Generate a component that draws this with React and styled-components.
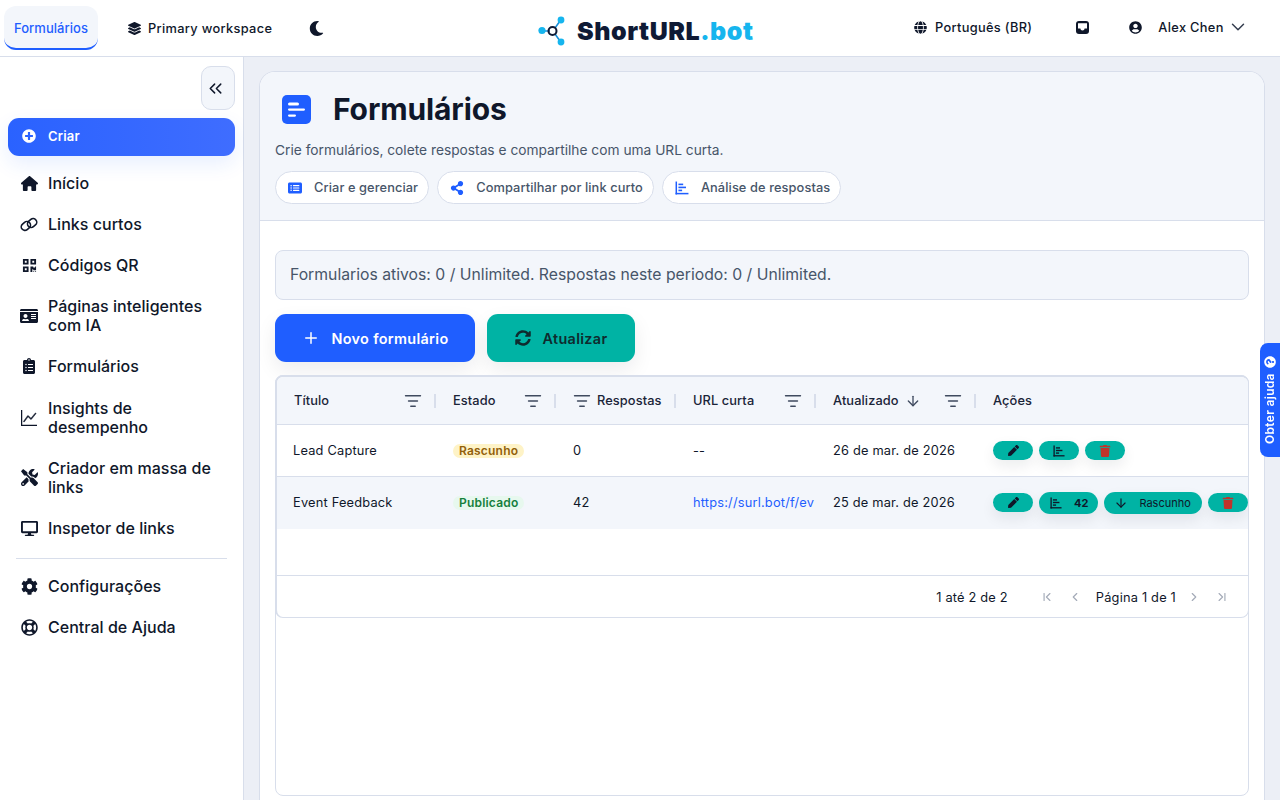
import React from "react";
import styled, { createGlobalStyle } from "styled-components";
import {
  FaLayerGroup,
  FaMoon,
  FaGlobe,
  FaUserCircle,
  FaPlusCircle,
  FaQrcode,
  FaIdCard,
  FaClipboardList,
  FaTools,
  FaDesktop,
  FaCog,
  FaRegLifeRing,
  FaShareAlt,
  FaSyncAlt,
  FaPen,
  FaTrash,
  FaQuestionCircle,
} from "react-icons/fa";
import { FaHouse, FaRectangleList } from "react-icons/fa6";
import { BsGraphUp } from "react-icons/bs";
import {
  ChevronDown,
  ChevronsLeft,
  Plus,
  ListFilter,
  ArrowDown,
  ChevronFirst,
  ChevronLast,
  ChevronLeft,
  ChevronRight,
} from "lucide-react";

const GlobalStyle = createGlobalStyle`
  html, body {
    margin: 0;
    height: 100%;
    overflow: hidden;
    background: #fff;
    font-family: Inter, "Noto Sans", sans-serif;
    color: #0f172a;
  }
  * { box-sizing: border-box; }
`;

//Page shell//
const Shell = styled.div`
  height: 800px;
  display: flex;
  flex-direction: column;
  overflow: hidden;
`;
const TopBar = styled.header`
  flex: 0 0 57px;
  display: flex;
  align-items: center;
  background: #fff;
  border-bottom: 1px solid #d8deeb;
`;
const TopLeft = styled.div`
  flex: 0 0 537px;
  display: flex;
  align-items: center;
  padding-left: 4px;
  align-self: flex-start;
  padding-top: 6px;
`;
const ActiveTab = styled.div`
  width: 94px;
  height: 44px;
  display: flex;
  align-items: center;
  justify-content: center;
  font-size: 13px;
  font-weight: 500;
  letter-spacing: 0.05px;
  padding-top: 1px;
  color: #1f5eff;
  background: #f3f6fb;
  border-radius: 12px;
  border-bottom: 2px solid #1f5eff;
`;
const TopItem = styled.div`
  display: flex;
  align-items: center;
  gap: ${(p) => p.$gap || 8}px;
  font-size: 12.8px;
  font-weight: 500;
  letter-spacing: 0.33px;
  color: #0f172a;
  margin-left: ${(p) => p.$ml || 0}px;
  white-space: nowrap;
`;
const WorkspaceItem = styled(TopItem)`
  height: 41px;
  gap: 7px;
`;
const UserIcon = styled(FaUserCircle)`
  margin-right: 9px;
`;
const UserChevron = styled(ChevronDown)`
  margin-left: -4px;
  color: #333c4e;
`;
const Logo = styled.div`
  display: flex;
  align-items: center;
  gap: 8px;
  font-family: Inter, sans-serif;
  font-weight: 900;
  font-size: 25px;
  letter-spacing: 0.55px;
  color: #0f1a35;
  padding-top: 6px;
  width: 217px;
  white-space: nowrap;
  span {
    color: #16b5ee;
  }
`;
const TopRight = styled.div`
  flex: 1;
  display: flex;
  align-items: center;
  padding: 0 0 2px 160px;
`;
const Body = styled.div`
  flex: 1;
  display: flex;
  min-height: 0;
`;

//Sidebar//
const Sidebar = styled.aside`
  flex: 0 0 244px;
  background: #fff;
  border-right: 1px solid #d8deeb;
  padding: 9px 8px 0;
`;
const CollapseRow = styled.div`
  display: flex;
  justify-content: flex-end;
  margin-bottom: 8px;
`;
const CollapseButton = styled.div`
  width: 34px;
  height: 44px;
  display: flex;
  align-items: center;
  justify-content: center;
  padding-right: 5px;
  background: #f3f6fb;
  border: 1px solid #d8deeb;
  border-radius: 10px;
  color: #0f172a;
`;
const CreateButton = styled.div`
  height: 38px;
  display: flex;
  align-items: center;
  gap: 12px;
  padding: 0 0 2px 14px;
  border-radius: 11px;
  background: linear-gradient(90deg, #2a62ff, #3f6dff);
  color: #fff;
  font-size: 13px;
  font-weight: 600;
  letter-spacing: 0.2px;
  box-shadow: 0 8px 20px rgba(31, 94, 255, 0.1);
  margin-bottom: 8px;
`;
const NavList = styled.nav`
  display: flex;
  flex-direction: column;
  gap: 3px;
`;
const NavItem = styled.div`
  display: flex;
  align-items: center;
  gap: 10px;
  padding: 9.5px 12px;
  margin-bottom: ${(p) => p.$mb || 0}px;
  font-size: 16px;
  line-height: 19px;
  font-weight: 500;
  letter-spacing: 0.03px;
  color: #0f172a;
`;
const NavIcon = styled.span`
  flex: 0 0 18px;
  width: 18px;
  height: 18px;
  display: flex;
  align-items: center;
  justify-content: center;
`;
const GraphIcon = styled(BsGraphUp)`
  stroke: currentColor;
  stroke-width: 0.5px;
`;
const NavDivider = styled.hr`
  border: none;
  height: 1px;
  background: #d8deeb;
  margin: 11px 8px 8px;
`;

//Main//
const Main = styled.main`
  flex: 1;
  min-width: 0;
  background: #eceff6;
  padding: 14px 15px 0;
`;
const Panel = styled.section`
  height: 100%;
  background: #fff;
  border: 1px solid #d8deeb;
  border-bottom: none;
  border-radius: 16px 16px 0 0;
  display: flex;
  flex-direction: column;
  overflow: hidden;
`;
const PanelHead = styled.div`
  flex: 0 0 149px;
  background: #f3f6fb;
  border-bottom: 1px solid #d8deeb;
  padding: 0 15px;
`;
const TitleRow = styled.div`
  display: flex;
  align-items: center;
  gap: 22px;
  height: 66px;
  padding: 8px 0 0 7px;
`;
const PageTitle = styled.h1`
  margin: 0;
  font-size: 30px;
  font-weight: 650;
  letter-spacing: -0.12px;
  color: #0f172a;
`;
const Subtitle = styled.p`
  margin: 2px 0 0;
  font-size: 13.76px;
  line-height: 20px;
  color: #475569;
`;
const ChipRow = styled.div`
  display: flex;
  gap: 8px;
  margin-top: 11px;
`;
const Chip = styled.div`
  height: 33px;
  display: flex;
  align-items: center;
  gap: 12px;
  padding: 0 10px 0 12px;
  background: #fff;
  border: 1px solid #d8deeb;
  border-radius: 17px;
  font-size: 12.8px;
  font-weight: 500;
  letter-spacing: 0.1px;
  color: #475569;
  svg {
    color: #1f5eff;
  }
`;
const PanelBody = styled.div`
  flex: 1;
  min-height: 0;
  padding: 29px 15px 0;
  display: flex;
  flex-direction: column;
`;
const InfoBox = styled.div`
  height: 50px;
  display: flex;
  align-items: center;
  padding: 0 14px 2px;
  background: #f3f6fb;
  border: 1px solid #d8deeb;
  border-radius: 8px;
  font-size: 15.76px;
  color: #475569;
`;
const ActionRow = styled.div`
  display: flex;
  gap: 12px;
  margin-top: 14px;
`;
const BigButton = styled.div`
  width: ${(p) => p.$w}px;
  height: 48px;
  display: flex;
  align-items: center;
  justify-content: center;
  gap: 12px;
  border-radius: 11px;
  font-size: 14.4px;
  font-weight: 600;
  letter-spacing: 0.33px;
  background: ${(p) => p.$bg};
  color: ${(p) => p.$fg};
  box-shadow: 0 8px 20px rgba(15, 23, 42, 0.08);
`;
const GridFrame = styled.div`
  height: 421px;
  margin-top: 13px;
  border: 1px solid #d8deeb;
  border-radius: 8px;
  flex-shrink: 0;
`;
const Grid = styled.div`
  height: 243px;
  margin: -1px;
  border: 2px solid #d8deeb;
  border-width: 2px 1px 1px 2px;
  border-radius: 8px;
  display: flex;
  flex-direction: column;
  overflow: hidden;
`;
const Row = styled.div`
  display: grid;
  grid-template-columns: 159px 120px 120px 140px 160px 1fr;
  height: ${(p) => p.$h}px;
  flex: 0 0 ${(p) => p.$h}px;
  align-items: center;
  background: ${(p) => p.$bg || "#fff"};
  border-bottom: ${(p) => (p.$noline ? "none" : "1px solid #d8deeb")};
  padding-bottom: ${(p) => (p.$noline ? 1 : 0)}px;
  font-size: 12.8px;
  letter-spacing: 0.2px;
  color: #0f172a;
`;
const HeadCell = styled.div`
  height: 100%;
  display: flex;
  align-items: center;
  justify-content: space-between;
  padding: 0 14px 0 17px;
  font-weight: 450;
  letter-spacing: 0.1px;
  position: relative;
  color: #1a2438;
  svg {
    color: #3f4a5f;
    flex: none;
  }
  &::after {
    content: "";
    display: ${(p) => (p.$last ? "none" : "block")};
    position: absolute;
    right: 0;
    top: 17px;
    height: 14px;
    width: 2px;
    background: #d8deeb;
  }
`;
const HeadGroup = styled.span`
  display: flex;
  align-items: center;
  gap: 6px;
`;
const Cell = styled.div`
  padding-left: ${(p) => p.$pl || 17}px;
  white-space: nowrap;
  overflow: hidden;
  a {
    color: #1f5eff;
    text-decoration: none;
  }
`;
const Badge = styled.span`
  display: inline-flex;
  align-items: center;
  height: 14px;
  padding: 0 6px;
  border-radius: 7px;
  font-size: 12px;
  font-weight: 600;
  background: ${(p) => (p.$kind === "draft" ? "#fef3c7" : "#e7f8ee")};
  color: ${(p) => (p.$kind === "draft" ? "#92600a" : "#15803d")};
`;
const Actions = styled.div`
  display: flex;
  align-items: center;
  gap: 6px;
  padding-left: 17px;
  white-space: nowrap;
`;
const ActionPill = styled.div`
  height: ${(p) => p.$h || 19}px;
  min-width: 40px;
  display: flex;
  align-items: center;
  justify-content: center;
  gap: ${(p) => p.$gap || 0}px;
  padding: 0 ${(p) => p.$pr || 0}px 0 ${(p) => p.$pl || 0}px;
  border-radius: 11px;
  background: #00b3a4;
  color: ${(p) => (p.$danger ? "#c0342b" : "#0f172a")};
  font-size: 11px;
  font-weight: ${(p) => p.$weight || 400};
  letter-spacing: 0;
  box-shadow: 0 6px 14px rgba(15, 23, 42, 0.08);
  flex: none;
`;
const Pager = styled.div`
  flex: 1;
  display: flex;
  align-items: center;
  justify-content: flex-end;
  padding: 1px 12px 0 0;
  font-size: 12.8px;
  letter-spacing: 0.2px;
  color: #0f172a;
`;
const PagerCount = styled.span`
  margin-right: 25px;
`;
const PagerLabel = styled.span`
  margin: 0 4px 0 7px;
`;
const PagerIcon = styled.span`
  display: flex;
  color: #a4abb8;
  margin: 0 7px;
`;
const HelpTab = styled.div`
  position: fixed;
  right: 0;
  top: 343px;
  width: 20px;
  height: 114px;
  display: flex;
  align-items: center;
  justify-content: center;
  gap: 6px;
  writing-mode: vertical-rl;
  transform: rotate(180deg);
  background: #1f5eff;
  color: #fff;
  border-radius: 0 8px 8px 0;
  font-size: 12px;
  font-weight: 600;
  letter-spacing: 0.3px;
`;
const HelpIcon = styled(FaQuestionCircle)`
  transform: rotate(90deg);
`;

const LogoMark = () => (
  <svg width="32" height="32" viewBox="0 0 32 32" fill="none">
    <path d="M7 16h6M18 13l5-7M18 19l5 7" stroke="#1c8fd8" strokeWidth="1.6" />
    <circle cx="5" cy="15.5" r="3.6" fill="#16b5ee" />
    <circle cx="24" cy="5" r="3.4" fill="#16b5ee" />
    <circle cx="24" cy="27" r="3.4" fill="#16b5ee" />
    <circle cx="15.5" cy="16" r="4" stroke="#0f1a35" strokeWidth="2" />
  </svg>
);

const FormsIcon = () => (
  <svg width="29" height="29" viewBox="0 0 29 29">
    <rect width="29" height="29" rx="5" fill="#1f5eff" />
    <rect x="6" y="7.5" width="11" height="3" rx="1.5" fill="#fff" />
    <rect x="6" y="13.5" width="17" height="2.2" rx="1.1" fill="#fff" />
    <rect x="6" y="19.5" width="8" height="2.2" rx="1.1" fill="#fff" />
  </svg>
);

const InboxIcon = () => (
  <svg width="13" height="13" viewBox="0 0 13 13">
    <rect width="13" height="13" rx="3" fill="#0f172a" />
    <path d="M2 2.2h9v5.3H8.6a2.1 2.1 0 0 1-4.2 0H2z" fill="#fff" />
  </svg>
);

const ChartIcon = ({ size = 13 }) => (
  <svg width={size} height={size} viewBox="0 0 13 13" fill="currentColor">
    <rect x="0.5" y="0.5" width="1.4" height="12" />
    <rect x="0.5" y="11" width="12" height="1.4" />
    <rect x="3.2" y="2.4" width="4.4" height="1.5" />
    <rect x="3.2" y="5.2" width="7" height="1.5" />
    <rect x="3.2" y="8" width="3.4" height="1.5" />
  </svg>
);

const LinkIcon = () => (
  <svg width="19" height="19" viewBox="0 0 19 19" fill="none" stroke="currentColor" strokeWidth="1.7">
    <rect x="1" y="7.2" width="10.4" height="7.6" rx="3.8" transform="rotate(-40 6.2 11)" />
    <rect x="7.6" y="4.2" width="10.4" height="7.6" rx="3.8" transform="rotate(-40 12.8 8)" />
  </svg>
);

const Filter = () => <ListFilter size={18} strokeWidth={1.8} />;

const navTop = [
  { icon: <FaHouse size={17} />, label: "Início" },
  { icon: <LinkIcon />, label: "Links curtos" },
  { icon: <FaQrcode size={15} />, label: "Códigos QR" },
  { icon: <FaIdCard size={18} />, label: "Páginas inteligentes com IA" },
  { icon: <FaClipboardList size={16} />, label: "Formulários", mb: 1 },
  { icon: <GraphIcon size={16} />, label: "Insights de desempenho" },
  { icon: <FaTools size={17} />, label: "Criador em massa de links" },
  { icon: <FaDesktop size={17} />, label: "Inspetor de links" },
];
const navBottom = [
  { icon: <FaCog size={17} />, label: "Configurações" },
  { icon: <FaRegLifeRing size={17} />, label: "Central de Ajuda" },
];

const renderNav = (items) =>
  items.map(({ icon, label, mb }) => (
    <NavItem key={label} $mb={mb}>
      <NavIcon>{icon}</NavIcon>
      <span>{label}</span>
    </NavItem>
  ));

const App = () => {
  return (
    <Shell>
      <GlobalStyle />
      <TopBar>
        <TopLeft>
          <ActiveTab>Formulários</ActiveTab>
          <WorkspaceItem $ml={30}>
            <FaLayerGroup size={13} />
            Primary workspace
          </WorkspaceItem>
          <WorkspaceItem $ml={37}>
            <FaMoon size={15} />
          </WorkspaceItem>
        </TopLeft>
        <Logo>
          <LogoMark />
          <div>
            ShortURL<span>.bot</span>
          </div>
        </Logo>
        <TopRight>
          <TopItem>
            <FaGlobe size={13} />
            Português (BR)
          </TopItem>
          <TopItem $ml={44}>
            <InboxIcon />
          </TopItem>
          <TopItem $ml={40} $gap={7}>
            <UserIcon size={13} />
            Alex Chen
            <UserChevron size={22} strokeWidth={1.6} />
          </TopItem>
        </TopRight>
      </TopBar>
      <Body>
        <Sidebar>
          <CollapseRow>
            <CollapseButton>
              <ChevronsLeft size={21} strokeWidth={1.7} />
            </CollapseButton>
          </CollapseRow>
          <CreateButton>
            <FaPlusCircle size={14} />
            Criar
          </CreateButton>
          <NavList>{renderNav(navTop)}</NavList>
          <NavDivider />
          <NavList>{renderNav(navBottom)}</NavList>
        </Sidebar>
        <Main>
          <Panel>
            <PanelHead>
              <TitleRow>
                <FormsIcon />
                <PageTitle>Formulários</PageTitle>
              </TitleRow>
              <Subtitle>
                Crie formulários, colete respostas e compartilhe com uma URL curta.
              </Subtitle>
              <ChipRow>
                <Chip>
                  <FaRectangleList size={14} />
                  Criar e gerenciar
                </Chip>
                <Chip>
                  <FaShareAlt size={14} />
                  Compartilhar por link curto
                </Chip>
                <Chip>
                  <ChartIcon size={14} />
                  Análise de respostas
                </Chip>
              </ChipRow>
            </PanelHead>
            <PanelBody>
              <InfoBox>
                Formularios ativos: 0 / Unlimited. Respostas neste periodo: 0 / Unlimited.
              </InfoBox>
              <ActionRow>
                <BigButton $w={200} $bg="#1f5eff" $fg="#fff">
                  <Plus size={18} />
                  Novo formulário
                </BigButton>
                <BigButton $w={148} $bg="#00b3a4" $fg="#0f2b2e">
                  <FaSyncAlt size={16} />
                  Atualizar
                </BigButton>
              </ActionRow>
              <GridFrame>
                <Grid>
                  <Row $h={48} $bg="#f3f6fb">
                    <HeadCell>
                      Título
                      <Filter />
                    </HeadCell>
                    <HeadCell>
                      Estado
                      <Filter />
                    </HeadCell>
                    <HeadCell>
                      <HeadGroup>
                        <Filter />
                        Respostas
                      </HeadGroup>
                    </HeadCell>
                    <HeadCell>
                      URL curta
                      <Filter />
                    </HeadCell>
                    <HeadCell>
                      <HeadGroup>
                        Atualizado
                        <ArrowDown size={16} />
                      </HeadGroup>
                      <Filter />
                    </HeadCell>
                    <HeadCell $last>Ações</HeadCell>
                  </Row>
                  <Row $h={52}>
                    <Cell $pl={16}>Lead Capture</Cell>
                    <Cell>
                      <Badge $kind="draft">Rascunho</Badge>
                    </Cell>
                    <Cell>0</Cell>
                    <Cell>--</Cell>
                    <Cell>26 de mar. de 2026</Cell>
                    <Actions>
                      <ActionPill>
                        <FaPen size={11} />
                      </ActionPill>
                      <ActionPill>
                        <ChartIcon size={12} />
                      </ActionPill>
                      <ActionPill $danger>
                        <FaTrash size={12} />
                      </ActionPill>
                    </Actions>
                  </Row>
                  <Row $h={52} $bg="#f3f6fb" $noline>
                    <Cell $pl={16}>Event Feedback</Cell>
                    <Cell>
                      <Badge $kind="live">Publicado</Badge>
                    </Cell>
                    <Cell>42</Cell>
                    <Cell>
                      <a href="#ev">https://surl.bot/f/ev</a>
                    </Cell>
                    <Cell>25 de mar. de 2026</Cell>
                    <Actions>
                      <ActionPill>
                        <FaPen size={11} />
                      </ActionPill>
                      <ActionPill $pl={11} $pr={10} $gap={12} $h={22} $weight={700}>
                        <ChartIcon size={12} />
                        42
                      </ActionPill>
                      <ActionPill $pl={10} $pr={11} $gap={11} $h={22}>
                        <ArrowDown size={14} />
                        Rascunho
                      </ActionPill>
                      <ActionPill $danger>
                        <FaTrash size={12} />
                      </ActionPill>
                    </Actions>
                  </Row>
                  <Row $h={47} />
                  <Pager>
                    <PagerCount>1 até 2 de 2</PagerCount>
                    <PagerIcon>
                      <ChevronFirst size={14} />
                    </PagerIcon>
                    <PagerIcon>
                      <ChevronLeft size={14} />
                    </PagerIcon>
                    <PagerLabel>Página 1 de 1</PagerLabel>
                    <PagerIcon>
                      <ChevronRight size={14} />
                    </PagerIcon>
                    <PagerIcon>
                      <ChevronLast size={14} />
                    </PagerIcon>
                  </Pager>
                </Grid>
              </GridFrame>
            </PanelBody>
          </Panel>
        </Main>
      </Body>
      <HelpTab>
        Obter ajuda
        <HelpIcon size={12} />
      </HelpTab>
    </Shell>
  );
};

export default App;
